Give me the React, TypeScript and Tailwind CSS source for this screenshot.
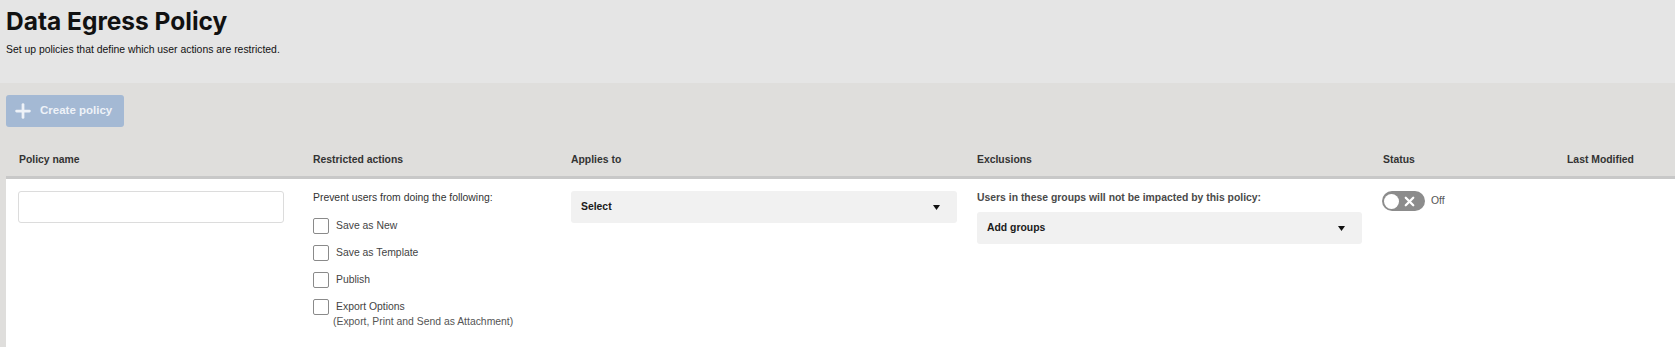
import { Plus, X } from 'lucide-react';

const actions = ['Save as New', 'Save as Template', 'Publish', 'Export Options'];

function Caret() {
  return (
    <svg width="7" height="5" viewBox="0 0 7 5" className="shrink-0">
      <path d="M0 0h7L3.5 5z" fill="#111" />
    </svg>
  );
}

function Checkbox({ label }: { label: string }) {
  return (
    <label className="flex items-center gap-[7px] h-4">
      <span className="w-4 h-4 border border-[#8a8a8a] rounded-[2px] bg-white shrink-0" />
      <span className="text-[10.4px] leading-[14px] text-[#444]">{label}</span>
    </label>
  );
}

export default function App() {
  return (
    <div className="h-screen overflow-hidden bg-[#dfdedc] flex flex-col font-['Liberation_Sans',Arial,sans-serif]">
      {/* page header */}
      <div className="bg-[#e5e5e5] h-[83px] px-[6px] pt-[7px] shrink-0">
        <h1 className="font-['Inter',sans-serif] font-bold text-[24.5px] leading-[28px] text-[#111]">
          Data Egress Policy
        </h1>
        <p className="mt-[8px] text-[10.4px] leading-[14px] text-[#111]">
          Set up policies that define which user actions are restricted.
        </p>
      </div>

      <div className="pt-[12px] pl-[6px] flex-1 flex flex-col">
        <button className="h-[32px] w-[118px] shrink-0 flex items-center gap-[6px] pl-[6px] rounded-[3px] bg-[#a4b9d4] text-[#eef2f8] text-[11.5px] font-bold">
          <Plus className="w-[22px] h-[22px]" strokeWidth={3} />
          Create policy
        </button>

        {/* table header */}
        <div className="mt-[17px] grid grid-cols-[295px_258px_406px_406px_184px_1fr] h-[35px] shrink-0 items-center border-b-[3px] border-[#c8c8c8] text-[10.4px] font-bold text-[#333]">
          <div className="pl-[13px]">Policy name</div>
          <div className="pl-[12px]">Restricted actions</div>
          <div className="pl-[12px]">Applies to</div>
          <div className="pl-[12px]">Exclusions</div>
          <div className="pl-[12px]">Status</div>
          <div className="pl-[12px]">Last Modified</div>
        </div>

        {/* policy row */}
        <div className="flex-1 bg-white grid grid-cols-[295px_258px_406px_406px_184px_1fr] pt-[12px]">
          <div className="pl-[12px]">
            <input className="w-[266px] h-[32px] border border-[#dcdcdc] rounded-[3px] outline-none px-2 text-[10.4px]" />
          </div>

          <div className="pl-[12px]">
            <p className="text-[10.4px] leading-[14px] text-[#333]">Prevent users from doing the following:</p>
            <div className="mt-[13px] flex flex-col gap-[11px]">
              {actions.map((a) => (
                <Checkbox key={a} label={a} />
              ))}
            </div>
            <p className="ml-[20px] text-[10.4px] leading-[14px] text-[#555]">
              (Export, Print and Send as Attachment)
            </p>
          </div>

          <div className="pl-[12px]">
            <div className="w-[386px] h-[32px] bg-[#f1f1f1] rounded-[3px] flex items-center justify-between pl-[10px] pr-[17px]">
              <span className="text-[10.4px] font-bold text-[#1a1a1a]">Select</span>
              <Caret />
            </div>
          </div>

          <div className="pl-[12px]">
            <p className="text-[10.4px] leading-[14px] font-bold text-[#4a4a4a]">
              Users in these groups will not be impacted by this policy:
            </p>
            <div className="mt-[7px] w-[385px] h-[32px] bg-[#f1f1f1] rounded-[3px] flex items-center justify-between pl-[10px] pr-[17px]">
              <span className="text-[10.4px] font-bold text-[#1a1a1a]">Add groups</span>
              <Caret />
            </div>
          </div>

          <div className="pl-[11px]">
            <div className="flex items-center gap-[6px]">
              <div className="w-[43px] h-[20px] rounded-full bg-[#8c8c8c] flex items-center justify-between pl-[2px] pr-[8px]">
                <span className="w-[15px] h-[15px] rounded-full bg-white" />
                <X className="w-[15px] h-[15px] text-white" strokeWidth={3.6} />
              </div>
              <span className="text-[10.4px] text-[#555]">Off</span>
            </div>
          </div>

          <div />
        </div>
      </div>
    </div>
  );
}
